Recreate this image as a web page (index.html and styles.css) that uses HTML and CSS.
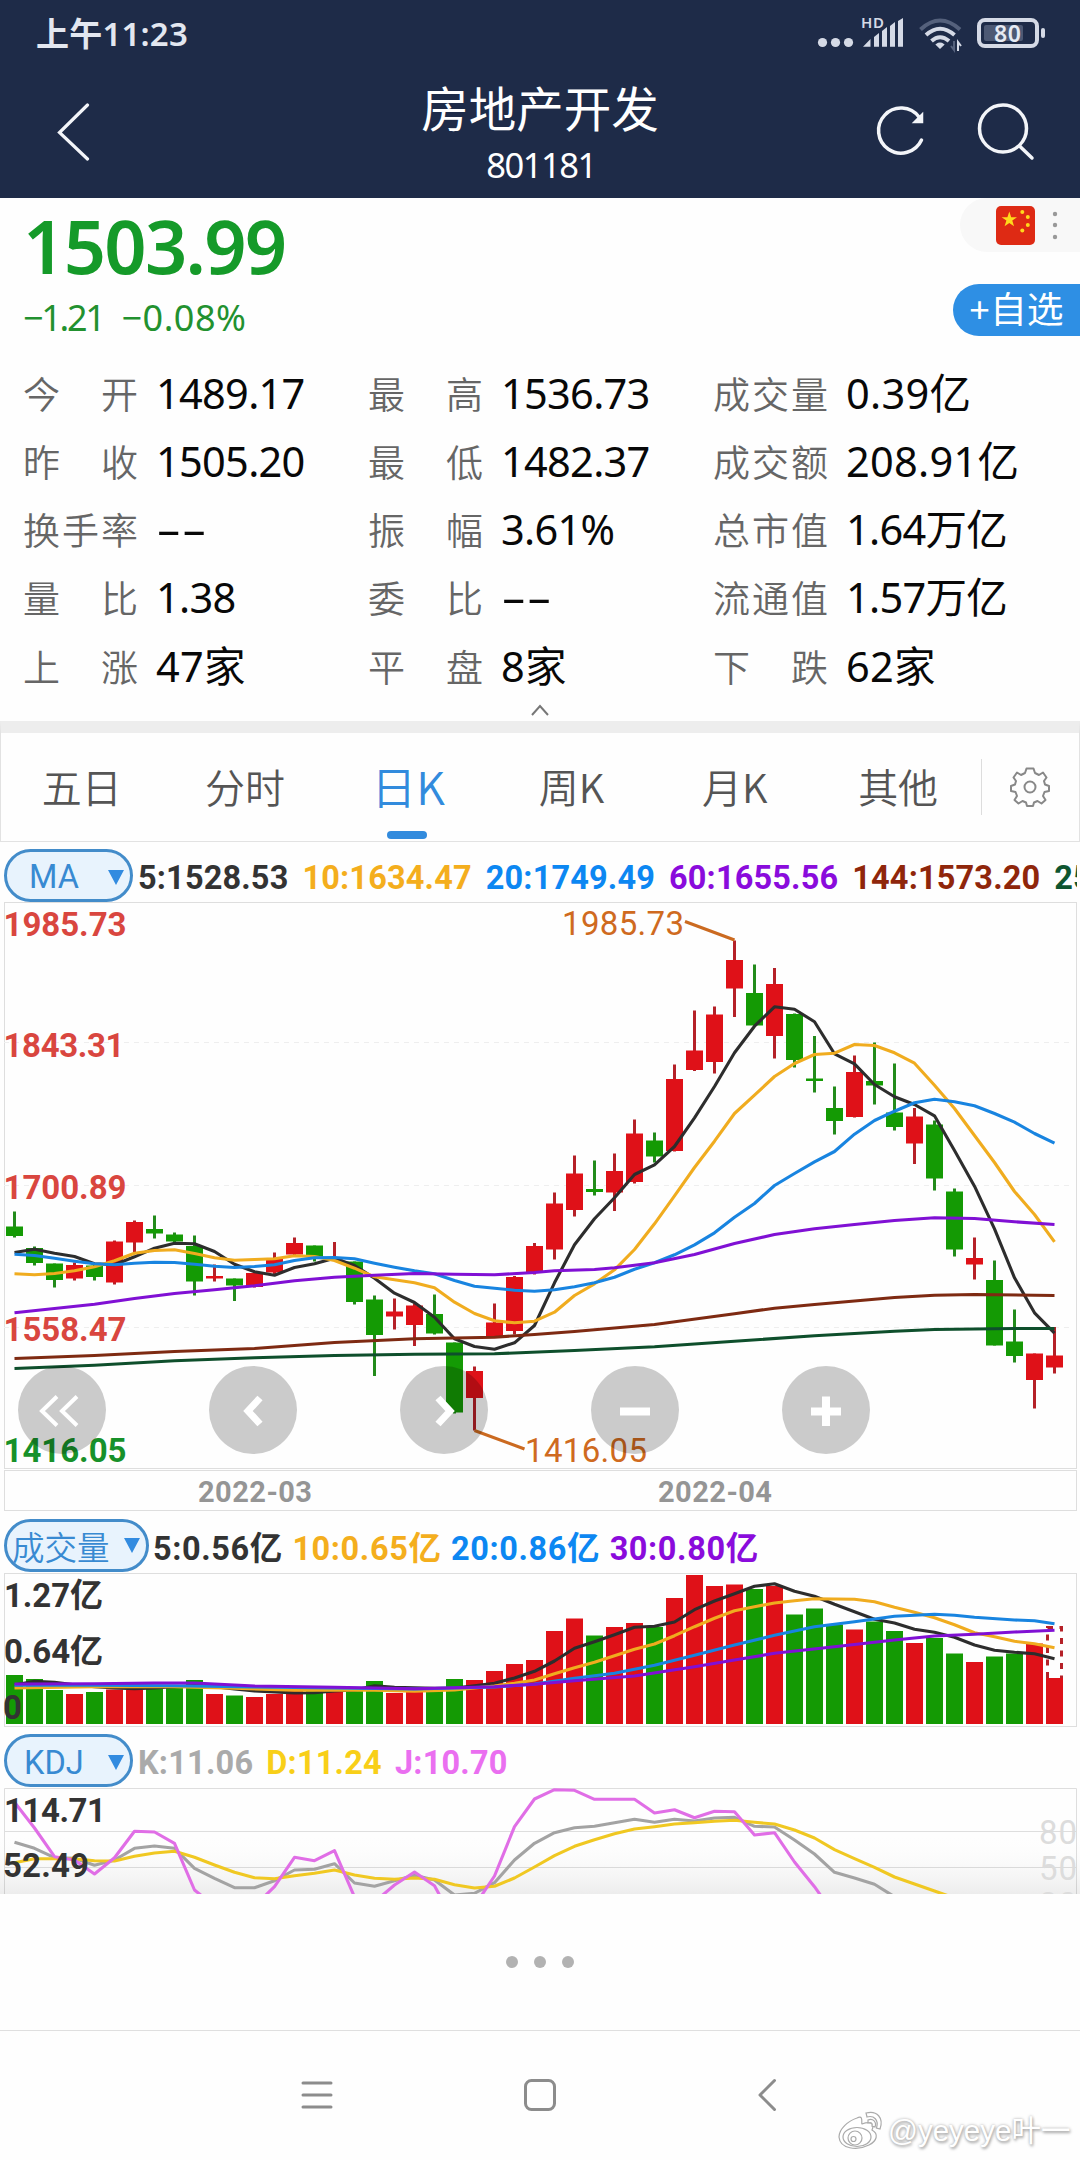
FILE: index.html
```html
<!DOCTYPE html>
<html lang="zh-CN">
<head>
<meta charset="utf-8">
<title>房地产开发 801181</title>
<link rel="stylesheet" href="styles.css">
</head>
<body>
<div class="screen">
  <header class="header">
    <div class="status">
      <span class="clock">上午11:23</span>
      <svg class="status-icons" viewBox="0 0 280 66" width="280" height="66">
        <g fill="#d5dae6">
          <circle cx="22.5" cy="42.500" r="4.600"/><circle cx="35.500" cy="42.500" r="4.600"/><circle cx="48.500" cy="42.500" r="4.600"/>
          <path d="M63 46.700L70.500 39V46.700ZM74 46.700V37L79 33V46.700ZM82 46.700V31L87 27V46.700ZM90 46.700V26L95 22V46.700ZM98 46.700V21L103 18V46.700Z"/>
        </g>
        <text x="61" y="28" class="hd" textLength="23">HD</text>
        <g fill="none" stroke="#d5dae6" stroke-width="4">
          <path d="M120.500 29.500Q140 11.500 160 29.500" stroke="#55617c"/>
          <path d="M126 35Q140 22.500 154.500 35"/>
          <path d="M131.500 41Q140 33.500 149 41"/>
          <path d="M140 48L136.500 44.500Q140 42 143.500 44.500Z" fill="#d5dae6" stroke-width="1.500"/>
          <path d="M154 41V50L151 46" stroke="#55617c" stroke-width="2"/>
          <path d="M158 51V42L161 46" stroke-width="2"/>
          <rect x="179" y="20" width="58" height="26" rx="6"/>
        </g>
        <rect x="184" y="25" width="39" height="16" rx="2" fill="#4d5974"/>
        <rect x="241" y="28" width="4" height="10" rx="2" fill="#d5dae6"/>
        <text x="194" y="42" class="battery" textLength="27">80</text>
      </svg>
    </div>
    <div class="titlebar">
      <svg class="back" viewBox="0 0 40 60" width="40" height="60"><path d="M33.500 4L5.500 31.500L33.500 58" fill="none" stroke="#f3f5f9" stroke-width="3.200" stroke-linecap="round"/></svg>
      <div class="title"><h1>房地产开发</h1><p>801181</p></div>
      <svg class="actions" viewBox="870 100 170 64" width="170" height="64">
        <g fill="none" stroke="#f3f5f9" stroke-width="3.500" stroke-linecap="round">
          <path d="M919 117A22.500 22.500 0 1 0 921.500 140"/>
          <path d="M922.500 113.500V122.500H913.500Z" fill="#f3f5f9" stroke-width="1.500"/>
          <circle cx="1003" cy="128.500" r="23.500"/><path d="M1019.500 146L1032 158"/>
        </g>
      </svg>
    </div>
  </header>

  <section class="quote">
    <div class="price">
      <strong>1503.99</strong>
      <div class="change"><span class="diff">−1.21</span><span>−0.08%</span></div>
    </div>
    <div class="side">
      <div class="market">
        <svg viewBox="0 0 39 39" width="39" height="39">
          <rect width="39" height="39" rx="5" fill="#de2a14"/>
          <g fill="#ffd91c"><path d="M13.300 5.500L15.200 11.200H21L16.300 14.600L18 20.300L13.300 16.900L8.600 20.300L10.400 14.600L5.600 11.200H11.400Z"/>
          <circle cx="26.300" cy="6" r="2"/><circle cx="31.800" cy="11" r="2"/><circle cx="31.800" cy="19" r="2"/><circle cx="26.300" cy="24.500" r="2"/></g>
        </svg>
        <svg viewBox="0 0 6 30" width="6" height="30" fill="#999"><circle cx="3" cy="4" r="2.200"/><circle cx="3" cy="15" r="2.200"/><circle cx="3" cy="27" r="2.200"/></svg>
      </div>
      <div class="add">+自选</div>
    </div>
  </section>

  <section class="stats">
    <div class="stat"><span>今　开</span><b>1489.17</b></div><div class="stat"><span>最　高</span><b>1536.73</b></div><div class="stat"><span>成交量</span><b class="amount">0.39亿</b></div>
    <div class="stat"><span>昨　收</span><b>1505.20</b></div><div class="stat"><span>最　低</span><b>1482.37</b></div><div class="stat"><span>成交额</span><b class="amount">208.91亿</b></div>
    <div class="stat"><span>换手率</span><b class="none">--</b></div><div class="stat"><span>振　幅</span><b>3.61%</b></div><div class="stat"><span>总市值</span><b>1.64万亿</b></div>
    <div class="stat"><span>量　比</span><b>1.38</b></div><div class="stat"><span>委　比</span><b class="none">--</b></div><div class="stat"><span>流通值</span><b>1.57万亿</b></div>
    <div class="stat"><span>上　涨</span><b class="amount">47家</b></div><div class="stat"><span>平　盘</span><b class="amount">8家</b></div><div class="stat"><span>下　跌</span><b class="amount">62家</b></div>
  </section>
  <div class="collapse"><svg viewBox="0 0 20 14" width="20" height="14"><path d="M2 12L10 3L18 12" fill="none" stroke="#777" stroke-width="2"/></svg></div>

  <nav class="tabs">
    <span>五日</span><span>分时</span><span class="active">日K</span><span>周K</span><span>月K</span><span>其他</span>
    <div class="settings"><svg viewBox="-22 -22 44 44" width="44" height="44" fill="none" stroke="#888" stroke-width="2" stroke-linejoin="round">
      <path d="M-3.500 -18.500H3.500L5 -14L9 -12L13 -14.500L16.500 -9.500L14 -6L15 -2.500L19 -1V4L14.500 5L13 9L15.500 13L11.500 16.500L7.500 14L4 15.500L3 19H-3L-4 15.500L-7.500 14L-11.500 16.500L-15.500 13L-13 9L-14.500 5L-19 4V-1L-15 -2.500L-14 -6L-16.500 -9.500L-13 -14.500L-9 -12L-5 -14Z"/><circle r="5.500"/></svg></div>
  </nav>

  <div class="legend ma">
    <span class="pill"><em>MA</em><i></i></span>
    <span class="c-black">5:1528.53</span><span class="c-orange">10:1634.47</span><span class="c-blue">20:1749.49</span><span class="c-purple">60:1655.56</span><span class="c-brown">144:1573.20</span><span class="c-green">255:1558.47</span>
  </div>

  <div class="kline">
    <svg viewBox="0 902.500 1080 609" width="1080" height="609">
      <g class="frame"><rect x="4.500" y="903" width="1072" height="566"/><rect x="4.500" y="1471" width="1072" height="40"/></g>
      <path class="dash" d="M4 1043H1072M4 1186H1072M4 1328H1072"/>
      <g class="axis red"><text x="3.500" y="936" textLength="123">1985.73</text><text x="3.500" y="1057.500" textLength="121">1843.31</text><text x="3.500" y="1199" textLength="123">1700.89</text><text x="3.500" y="1341" textLength="123">1558.47</text></g>
      <text class="axis down" x="3.500" y="1462.500" textLength="123">1416.05</text>
      <path class="wick g" d="M14.500 1212V1238M34.500 1247V1266M54.500 1264V1288M94.500 1264V1281M154.500 1216V1239M174.500 1233V1245M194.500 1236V1296M234.500 1279V1301.500M314.500 1246V1262M354.500 1262V1305M374.500 1296V1376.500M434.500 1295V1335M454.500 1343V1414M594.500 1161V1196M654.500 1133V1163M754.500 965V1026M794.500 1014V1068M814.500 1036.500V1093M834.500 1087V1135M874.500 1043V1105M894.500 1064V1131M934.500 1121V1191M954.500 1189V1257M994.500 1261V1346M1014.500 1310V1363"/>
      <path class="body g" d="M14.500 1227V1236.500M34.500 1248.500V1263.500M54.500 1264V1280.500M94.500 1266V1277.500M154.500 1229.500V1234M174.500 1235V1242M194.500 1246.500V1282M234.500 1279V1286M314.500 1246V1257.500M354.500 1262V1302.500M374.500 1300V1335.500M434.500 1314.500V1334M454.500 1343V1413M594.500 1189.500V1192.500M654.500 1141V1157M754.500 993.500V1026M794.500 1014.500V1060.500M814.500 1079V1081.500M834.500 1108.500V1121.500M874.500 1081.500V1086M894.500 1113V1127.500M934.500 1125V1179M954.500 1192V1250M994.500 1280.500V1346M1014.500 1342V1356.500"/>
      <path class="wick r" d="M74.500 1263V1281M114.500 1241V1285M134.500 1221V1253M214.500 1265V1282M254.500 1273V1288M274.500 1253V1276M294.500 1238V1257M334.500 1242.500V1260M394.500 1299V1330M414.500 1304V1346.500M474.500 1367V1431M494.500 1304V1337M514.500 1276.500V1335M534.500 1243.500V1275M554.500 1193V1260M574.500 1156V1217M614.500 1154V1211.500M634.500 1120V1184M674.500 1065V1152M694.500 1011V1071.500M714.500 1007V1074M734.500 941V1017.500M774.500 968.500V1059M854.500 1056V1118M914.500 1108.500V1164.500M974.500 1238V1280M1034.500 1354V1409M1054.500 1327.500V1374"/>
      <path class="body r" d="M74.500 1265.500V1279M114.500 1242V1283M134.500 1222.500V1243M214.500 1276.500V1279M254.500 1273.500V1287.500M274.500 1259V1273M294.500 1243.500V1255M334.500 1258V1260M394.500 1312V1317M414.500 1306V1325.500M474.500 1371.500V1398.500M494.500 1323V1337M514.500 1277.500V1331.500M534.500 1246.500V1273.500M554.500 1204V1250M574.500 1174V1210.500M614.500 1171.500V1193M634.500 1134V1182.500M674.500 1079.500V1151.500M694.500 1051V1070.500M714.500 1015V1062.500M734.500 960.500V989M774.500 984.500V1036.500M854.500 1072.500V1117.500M914.500 1117V1144M974.500 1258.500V1265M1034.500 1354V1380.500M1054.500 1356V1368"/>
      <g class="line">
        <polyline class="s-black" points="14.500,1253 34.500,1249.700 54.500,1253.700 74.500,1257 94.500,1264.300 114.500,1265.300 134.500,1257.300 154.500,1248.700 174.500,1243.700 194.500,1244.300 214.500,1252 234.500,1264.700 254.500,1272.300 274.500,1275.700 294.500,1268 314.500,1264.300 334.500,1258.700 354.500,1266 374.500,1278.700 394.500,1293.700 414.500,1303 434.500,1317.700 454.500,1339.300 474.500,1347 494.500,1349.700 514.500,1343.300 534.500,1326 554.500,1283.300 574.500,1245.300 594.500,1219.300 614.500,1198.300 634.500,1175 654.500,1165.300 674.500,1147 694.500,1118.300 714.500,1087 734.500,1053.300 754.500,1026.700 774.500,1007.300 794.500,1009.700 814.500,1022.300 834.500,1054.300 854.500,1064.300 874.500,1085 894.500,1097.300 914.500,1105 934.500,1116.300 954.500,1151 974.500,1186.700 994.500,1229.300 1014.500,1278.300 1034.500,1313.300 1054.500,1333.700"/>
        <polyline class="s-orange" points="14.500,1274.300 34.500,1275.300 54.500,1274 74.500,1271.300 94.500,1267.300 114.500,1261.300 134.500,1253.700 154.500,1251 174.500,1250.300 194.500,1254 214.500,1258.300 234.500,1260.700 254.500,1260 274.500,1259.300 294.500,1256.300 314.500,1257 334.500,1261 354.500,1268.700 374.500,1277.300 394.500,1280.300 414.500,1283.300 434.500,1288.300 454.500,1302.700 474.500,1314 494.500,1321.300 514.500,1323.300 534.500,1321.700 554.500,1312.700 574.500,1296 594.500,1284.300 614.500,1270.300 634.500,1250 654.500,1224.300 674.500,1196.300 694.500,1168 714.500,1141.700 734.500,1114 754.500,1095.700 774.500,1077 794.500,1064 814.500,1055 834.500,1053.700 854.500,1045 874.500,1046 894.500,1053.300 914.500,1063.700 934.500,1085.700 954.500,1109 974.500,1136 994.500,1163 1014.500,1192 1034.500,1215 1054.500,1242.300"/>
        <polyline class="s-blue" points="14.500,1254.700 34.500,1256 54.500,1258.700 74.500,1261.700 94.500,1264.300 114.500,1265.300 134.500,1263.700 154.500,1262.700 174.500,1263 194.500,1264.700 214.500,1266.700 234.500,1268 254.500,1267 274.500,1265.300 294.500,1261 314.500,1258.300 334.500,1258 354.500,1259.300 374.500,1263.700 394.500,1267.700 414.500,1271.300 434.500,1274.300 454.500,1281 474.500,1286.700 494.500,1288.700 514.500,1290.700 534.500,1291.700 554.500,1290.300 574.500,1287.300 594.500,1283.300 614.500,1277.700 634.500,1269.700 654.500,1263.300 674.500,1255.300 694.500,1245.300 714.500,1233.300 734.500,1217.700 754.500,1204 774.500,1186 794.500,1174 814.500,1162.300 834.500,1152 854.500,1134.700 874.500,1121 894.500,1111.700 914.500,1103.300 934.500,1099.700 954.500,1102.300 974.500,1106.300 994.500,1114 1014.500,1122.700 1034.500,1134 1054.500,1143.700"/>
        <polyline class="s-purple" points="14.500,1313.300 54.500,1309 94.500,1304.700 134.500,1299 174.500,1294 214.500,1290.300 254.500,1286.300 294.500,1281.300 334.500,1277.700 374.500,1275.700 414.500,1274 454.500,1274.700 494.500,1275.300 534.500,1273 554.500,1271.300 594.500,1270 614.500,1268.300 654.500,1263.300 694.500,1255 734.500,1244 774.500,1235 814.500,1229.300 854.500,1225 894.500,1221 934.500,1218.300 974.500,1219 1014.500,1222.300 1054.500,1225"/>
        <polyline class="s-brown" points="14.500,1359 94.500,1356 174.500,1352 254.500,1349 334.500,1343 414.500,1339.300 494.500,1337.700 534.500,1335 574.500,1332 654.500,1325 734.500,1314.300 774.500,1308.700 814.500,1305 894.500,1298 934.500,1295.700 974.500,1295 1054.500,1296"/>
        <polyline class="s-green" points="14.500,1369 94.500,1365.700 174.500,1361.300 254.500,1358.300 334.500,1356 414.500,1354.700 494.500,1354.300 574.500,1351 654.500,1347.300 734.500,1341.700 814.500,1336.300 894.500,1331.700 934.500,1330 1014.500,1329 1054.500,1329"/>
        <path class="s-mark" d="M685 922L734.500 940.500M474.500 1431L524.500 1449.500"/>
      </g>
      <g class="mark"><text x="562" y="935" textLength="122">1985.73</text><text x="525" y="1462.500" textLength="122">1416.05</text></g>
      <g class="date"><text x="198" y="1502.500" textLength="114">2022-03</text><text x="658" y="1502.500" textLength="114">2022-04</text></g>
    </svg>
    <div class="controls">
      <svg viewBox="-44 -44 88 88"><circle r="44"/><path class="thin" d="M-5 -13.500L-20 1L-5 15.500M15 -13.500L0 1L15 15.500"/></svg>
      <svg viewBox="-44 -44 88 88"><circle r="44"/><path d="M7 -12L-5 1L7 14"/></svg>
      <svg viewBox="-44 -44 88 88"><circle r="44"/><path d="M-6 -12L6 1L-6 14"/></svg>
      <svg viewBox="-44 -44 88 88"><circle r="44"/><path class="thick" d="M-15 1.500H15"/></svg>
      <svg viewBox="-44 -44 88 88"><circle r="44"/><path class="thick" d="M-15 1.500H15M0 -13.500V16"/></svg>
    </div>
  </div>

  <div class="legend vol">
    <span class="pill wide"><em>成交量</em><i></i></span>
    <span class="c-black">5:0.56亿</span><span class="c-orange">10:0.65亿</span><span class="c-blue">20:0.86亿</span><span class="c-purple">30:0.80亿</span>
  </div>
  <svg class="volume" viewBox="0 1573 1080 155" width="1080" height="155">
    <g class="frame"><rect x="4.500" y="1573.500" width="1072" height="153"/></g>
    <path class="body g" d="M14.500 1675V1724M34.500 1679V1724M54.500 1690V1724M94.500 1692V1724M154.500 1688V1724M174.500 1688V1724M194.500 1680V1724M234.500 1695.500V1724M314.500 1690V1724M354.500 1691V1724M374.500 1681V1724M434.500 1690V1724M454.500 1679V1724M594.500 1635.500V1724M654.500 1627V1724M754.500 1589V1724M794.500 1614.500V1724M814.500 1608.500V1724M834.500 1624.500V1724M874.500 1621.500V1724M894.500 1631V1724M934.500 1638V1724M954.500 1653.500V1724M994.500 1656.500V1724M1014.500 1653.500V1724"/>
    <path class="body r" d="M74.500 1694V1724M114.500 1689.500V1724M134.500 1689.500V1724M214.500 1694V1724M254.500 1697V1724M274.500 1694V1724M294.500 1690V1724M334.500 1691V1724M394.500 1693V1724M414.500 1692V1724M474.500 1680V1724M494.500 1671V1724M514.500 1664V1724M534.500 1660V1724M554.500 1631V1724M574.500 1618.500V1724M614.500 1627V1724M634.500 1623V1724M674.500 1598V1724M694.500 1575V1724M714.500 1586V1724M734.500 1584.500V1724M774.500 1586V1724M854.500 1629.500V1724M914.500 1643V1724M974.500 1662V1724M1034.500 1643.500V1724M1054.500 1678V1724"/>
    <path d="M1047.500 1678V1627.500H1061.500V1678" fill="none" stroke="#b52128" stroke-width="3" stroke-dasharray="6 6.500"/>
    <g class="line">
      <polyline class="s-black" points="14.500,1685 34.500,1681.300 54.500,1682.300 74.500,1684.700 94.500,1686.700 114.500,1688 134.500,1688.700 154.500,1688 174.500,1686.700 194.500,1685.700 214.500,1686.700 234.500,1689 254.500,1691 274.500,1692 294.500,1693 314.500,1692.700 334.500,1691 354.500,1690 374.500,1685.700 394.500,1687.300 414.500,1687.700 434.500,1688.300 454.500,1688 474.500,1685.700 494.500,1683.300 514.500,1678 534.500,1671.300 554.500,1661 574.500,1648.300 594.500,1641.700 614.500,1634.700 634.500,1627.300 654.500,1626.300 674.500,1622 694.500,1609.700 714.500,1601 734.500,1593.700 754.500,1586.300 774.500,1583.700 794.500,1591.300 814.500,1596.300 834.500,1604.300 854.500,1611.700 874.500,1619.300 894.500,1623 914.500,1629.300 934.500,1632.300 954.500,1637.300 974.500,1645 994.500,1650.300 1014.500,1652.300 1034.500,1653.700 1054.500,1658.700"/>
      <polyline class="s-orange" points="14.500,1688 94.500,1686.700 174.500,1686.700 234.500,1688.300 294.500,1690.300 374.500,1690.300 414.500,1691.300 454.500,1690 494.500,1686 514.500,1683.300 534.500,1680 554.500,1673.700 574.500,1667.700 594.500,1662.300 614.500,1655.700 634.500,1649.300 654.500,1644 674.500,1635.700 694.500,1626.700 714.500,1618.300 734.500,1610.700 754.500,1606.700 774.500,1603 794.500,1600.700 814.500,1598.700 854.500,1599.300 874.500,1601.700 894.500,1607.300 914.500,1612.300 934.500,1617.700 954.500,1624.700 974.500,1632.700 994.500,1636.700 1014.500,1641.300 1034.500,1643.700 1054.500,1647.700"/>
      <polyline class="s-blue" points="14.500,1685.300 94.500,1685.300 174.500,1685.700 254.500,1687 334.500,1688 414.500,1689 494.500,1687 534.500,1684 574.500,1678.300 614.500,1673.300 654.500,1665.300 694.500,1655.300 734.500,1645 774.500,1635.300 814.500,1626.700 854.500,1621.700 894.500,1616.300 934.500,1614.300 954.500,1615.300 974.500,1617.300 1014.500,1620 1034.500,1620.700 1054.500,1623.700"/>
      <polyline class="s-purple" points="14.500,1684 94.500,1683.700 154.500,1683 194.500,1683 254.500,1686 334.500,1687.300 414.500,1688.700 494.500,1686.700 534.500,1684.300 574.500,1680.700 634.500,1676 694.500,1666.700 734.500,1660 774.500,1653.300 834.500,1646.700 894.500,1640 934.500,1636 974.500,1634.300 1014.500,1632 1054.500,1630.300"/>
    </g>
    <g class="axis dark"><text x="4" y="1607" textLength="99">1.27亿</text><text x="4" y="1662.500" textLength="99">0.64亿</text><text x="3" y="1719">0</text></g>
  </svg>

  <div class="legend kdj">
    <span class="pill"><em>KDJ</em><i></i></span>
    <span class="c-gray">K:11.06</span><span class="c-yellow">D:11.24</span><span class="c-pink">J:10.70</span>
  </div>
  <svg class="kdj-chart" viewBox="0 1788 1080 106" width="1080" height="106">
    <defs><linearGradient id="fade" x1="0" y1="0" x2="0" y2="1"><stop offset="0" stop-color="#fff" stop-opacity="0"/><stop offset="1" stop-color="#000" stop-opacity=".07"/></linearGradient></defs>
    <g class="frame"><path d="M4.500 1894V1788.500H1076.500V1894M4 1831.500H1076M4 1867.500H1076"/></g>
    <rect x="0" y="1835" width="1080" height="59" fill="url(#fade)"/>
    <g class="level"><text x="1039" y="1843.500" textLength="38">80</text><text x="1039" y="1879.500" textLength="38">50</text><text x="1039" y="1916" textLength="38">20</text></g>
    <g class="line">
      <polyline class="s-gray" points="14.500,1842.300 34.500,1848.300 54.500,1857.700 74.500,1858.300 94.500,1865.300 114.500,1860 134.500,1848.300 154.500,1846 174.500,1848.300 194.500,1868.300 214.500,1878.300 234.500,1887.700 254.500,1887.700 274.500,1880.700 294.500,1870 314.500,1869.300 334.500,1863.700 354.500,1883 374.500,1886.300 394.500,1880.700 414.500,1875.300 434.500,1880 454.500,1895 474.500,1893.300 494.500,1882.700 514.500,1860 534.500,1843.300 554.500,1832.700 574.500,1827.700 594.500,1826.300 614.500,1822.700 634.500,1819.300 654.500,1822.300 674.500,1819.300 694.500,1821 714.500,1818 734.500,1817.300 754.500,1826.300 774.500,1827 794.500,1840 814.500,1854 834.500,1872.300 854.500,1878 874.500,1884.300 894.500,1896.700"/>
      <polyline class="s-yellow" points="14.500,1862.700 34.500,1858.700 74.500,1858.700 94.500,1860.700 114.500,1861 134.500,1856.300 154.500,1853 174.500,1851.300 194.500,1857.300 214.500,1865 234.500,1872.300 254.500,1877.700 274.500,1878.700 294.500,1875.700 314.500,1873.300 334.500,1870 354.500,1875 374.500,1878.300 394.500,1879.300 414.500,1878 434.500,1879.300 454.500,1884.700 474.500,1888 494.500,1886.300 514.500,1878 534.500,1867 554.500,1855.700 574.500,1846.300 594.500,1839.700 614.500,1833.700 634.500,1829 654.500,1826.700 674.500,1824 694.500,1822.700 714.500,1821.300 734.500,1820.300 754.500,1822.300 774.500,1824 794.500,1830 814.500,1838 834.500,1849.700 854.500,1858.700 874.500,1867.300 894.500,1877 914.500,1884 934.500,1891 954.500,1898"/>
      <polyline class="s-pink" points="14.500,1802.300 34.500,1828 54.500,1856.700 74.500,1860 94.500,1874 114.500,1857.700 134.500,1831.300 154.500,1832 174.500,1843.300 194.500,1890 214.500,1906 254.500,1906 274.500,1886.700 294.500,1857.300 314.500,1860.700 334.500,1850.700 354.500,1897 374.500,1902 394.500,1885 414.500,1872 434.500,1885.700 454.500,1923 474.500,1906 494.500,1876 514.500,1826.700 534.500,1799 554.500,1789.700 574.500,1790.300 594.500,1799.300 634.500,1799.300 654.500,1813 674.500,1809.700 694.500,1817.700 714.500,1811.300 734.500,1811.700 754.500,1835 774.500,1832.700 794.500,1862 814.500,1886.700 834.500,1915"/>
    </g>
    <g class="axis dark"><text x="4" y="1822" textLength="102">114.71</text><text x="3" y="1877" textLength="86">52.49</text></g>
  </svg>

  <div class="more"><i></i><i></i><i></i></div>
  <footer class="nav">
    <svg viewBox="0 2031 1080 129" width="1080" height="129" fill="none" stroke="#8c8c8c" stroke-width="3" stroke-linecap="round" stroke-linejoin="round">
      <path d="M303 2083H331M303 2095H331M303 2107H331"/><rect x="525.500" y="2080.500" width="29" height="29" rx="6"/><path d="M774.500 2080.500L760 2095L774.500 2109.500"/>
    </svg>
  </footer>
  <div class="watermark">
    <svg viewBox="0 0 48 42" width="48" height="42" fill="#fff" stroke="#aaa" stroke-width="1.200">
      <path d="M20 8C27 4 24 14 25 14C33 11 38 13 35 20C42 24 40 31 32 35C20 41 3 39 2 27C2 19 11 11 20 8Z"/><ellipse cx="20" cy="27" rx="14" ry="9.500"/><circle cx="18" cy="28" r="7"/><circle cx="16.500" cy="29" r="2.500"/><path d="M29 3C40 0 47 8 43 19L39.500 18C42 10 37 5 30 7ZM31 10C36 8 40 12 38 17L35 16C36 13 34 12 31 13Z"/>
    </svg>
    <span>@yeyeye叶一</span>
  </div>
</div>
</body>
</html>
```
FILE: styles.css
```css
* { box-sizing: border-box; margin: 0; padding: 0; }
body { background: #fff; }
.screen {
  position: relative;
  display: flex;
  flex-direction: column;
  width: 1080px;
  height: 2160px;
  overflow: hidden;
  background: #fefefe;
  font-family: "Noto Sans", "Noto Sans CJK SC", sans-serif;
  color: #111;
}
svg { display: block; flex: none; }

.header { height: 198px; background: #1e2b48; color: #fff; }
.status { display: flex; justify-content: space-between; height: 66px; padding-left: 36px; }
.clock { font-size: 33px; line-height: 67px; font-weight: 600; color: #e3e7f0; letter-spacing: .2px; }
.hd { font: 600 15px "Noto Sans", sans-serif; fill: #d5dae6; }
.battery { font: 600 23px "Noto Sans", sans-serif; fill: #e6eaf3; }
.titlebar { display: grid; grid-template-columns: 232px 1fr 232px; height: 132px; }
.back { margin: 35px 0 0 54px; }
.actions { margin: 34px 0 0 22px; }
.title { text-align: center; }
.title h1 { height: 76px; font-size: 47.500px; line-height: 85px; font-weight: 400; }
.title p { padding-left: 2px; font-size: 34.500px; line-height: 46px; letter-spacing: -1.500px; }

.quote { display: flex; justify-content: space-between; height: 161px; }
.price { padding-left: 23px; color: #159a29; }
.price strong { display: block; height: 90px; font-size: 74px; line-height: 96px; font-weight: 600; letter-spacing: -1.700px; }
.change { display: flex; gap: 18px; font-size: 36px; line-height: 60px; letter-spacing: .500px; color: #22912f; }
.diff { letter-spacing: -2.300px; }
.side { display: flex; flex-direction: column; align-items: flex-end; gap: 32px; }
.market { display: flex; align-items: center; gap: 17px; width: 120px; height: 54px; padding-left: 36px; border-radius: 27px 0 0 27px; background: #f8f8f8; }
.add { width: 127px; height: 52px; padding-left: 16px; border-radius: 26px 0 0 26px; background: #2e8fe4; color: #fff; font-size: 36.800px; line-height: 51px; white-space: nowrap; }

.stats { display: grid; grid-template-columns: 345px 345px 1fr; grid-auto-rows: 68.200px; height: 341px; padding-left: 23px; }
.stat { display: flex; align-items: center; white-space: nowrap; }
.stat span { width: 133px; font-size: 37px; letter-spacing: 2px; color: #666; font-weight: 350; font-family: "Noto Sans CJK SC", sans-serif; }
.stat b { font-size: 41.500px; line-height: 68px; font-weight: 400; letter-spacing: -.700px; color: #080808; }
.stat .amount { letter-spacing: .300px; }
.stat .none { letter-spacing: 0; transform: scaleX(1.900); transform-origin: left; }
.collapse { display: flex; justify-content: center; height: 21px; padding-top: 3px; }

.tabs { position: relative; display: flex; align-items: center; height: 121px; border: solid #e2e2e2; border-width: 1px 1px 1px; border-top: 12px solid #ededed; font-family: "Noto Sans CJK SC", sans-serif; font-size: 40px; font-weight: 350; color: #555; }
.tabs span { display: flex; justify-content: center; width: 163.300px; height: 108px; line-height: 106px; padding-right: 2px; }
.tabs .active { position: relative; font-size: 45px; font-weight: 350; color: #328bdd; }
.tabs .active::after { content: ""; position: absolute; left: 59px; bottom: 2px; width: 40px; height: 8px; border-radius: 4px; background: #328bdd; }
.settings { display: flex; align-items: center; justify-content: center; flex: 1; height: 56px; border-left: 1px solid #ddd; }

.legend { display: flex; align-items: center; height: 61px; width: 1077px; padding: 11px 0 0 4px; gap: 14px; overflow: hidden; white-space: nowrap; font: 700 32.500px Roboto, "Noto Sans CJK SC", sans-serif; letter-spacing: .15px; }
.legend > span { flex: none; }
.pill { display: flex; align-items: center; justify-content: space-between; width: 129px; height: 53px; margin: 0 -9px 5px 0; padding: 4px 6px 0 22px; border: 3px solid #438cca; border-radius: 27px; background: #e8f3fd; color: #388ad2; }
.pill em { font-style: normal; font-weight: 400; letter-spacing: 0; }
.pill.wide { width: 145px; padding: 0 6px 0 5px; }
.pill.wide em { font-weight: 350; }
.pill i { border: 8.500px solid transparent; border-top: 15px solid #328be0; border-bottom: 0; }
.vol { height: 62px; padding-top: 7px; gap: 9.500px; letter-spacing: .6px; }
.vol .pill { margin: 0 -5.500px 1px 0; }
.kdj { height: 60px; padding-top: 10px; gap: 13px; letter-spacing: .2px; }
.kdj .pill { padding-left: 17px; margin: 0 -8px 5px 0; }
.c-black { color: #333; }
.c-orange { color: #f4ae1d; }
.c-blue { color: #0c87f2; }
.c-purple { color: #8a0bdc; }
.c-brown { color: #8f260b; }
.c-green { color: #0e5530; }
.c-gray { color: #aaa; }
.c-yellow { color: #f8cf18; }
.c-pink { color: #ea6ff0; }

.kline { position: relative; height: 609px; }
.controls { position: absolute; left: 17.500px; top: 463.500px; display: flex; gap: 103px; }
.controls svg { width: 88px; height: 88px; }
.controls circle { fill: #000; fill-opacity: .2; }
.controls path { fill: none; stroke: #fff; stroke-width: 7; }
.controls .thin { stroke-width: 4; }
.controls .thick { stroke-width: 8; }

.frame { fill: none; stroke: #dedede; stroke-width: 1; }
.dash { stroke: #eee; stroke-dasharray: 5 5; }
.axis { font: 700 33px Roboto, "Noto Sans CJK SC", sans-serif; }
.red { fill: #d9463f; }
.down { fill: #17912a; }
.dark { fill: #333; }
.wick { stroke-width: 3; }
.body { stroke-width: 17; }
.g { stroke: #149a04; }
.wick.g { stroke: #238b1b; }
.r { stroke: #df1118; }
.wick.r { stroke: #b52128; }
.line { fill: none; stroke-width: 3.100; stroke-linejoin: round; }
.s-black { stroke: #2d2d2d; }
.s-orange { stroke: #f0ac1f; }
.s-blue { stroke: #1884e0; }
.s-purple { stroke: #8010d4; }
.s-brown { stroke: #7e2a12; }
.s-green { stroke: #0e4f2c; }
.s-gray { stroke: #a3a3a3; }
.s-yellow { stroke: #f0c822; }
.s-pink { stroke: #e06ee6; }
.s-mark { stroke: #cb6a20; }
.mark { font: 400 33px Roboto, sans-serif; fill: #cf6a20; }
.date { font: 700 29px Roboto, sans-serif; fill: #959595; }
.level { font: 400 33px Roboto, sans-serif; fill: #dcdcdc; }

.more { display: flex; justify-content: center; align-items: center; gap: 16px; height: 136px; }
.more i { width: 12px; height: 12px; border-radius: 50%; background: #b2b2b2; }
.nav { height: 130px; border-top: 1px solid #dfdfdf; }
.watermark { position: absolute; left: 837px; top: 2110px; display: flex; align-items: center; gap: 3px; color: #fff; font: 400 29.500px/42px "Liberation Sans", "Noto Sans CJK SC", sans-serif; text-shadow: 0 0 3px #aaa, 1px 2px 3px #aaa; white-space: nowrap; }
```
